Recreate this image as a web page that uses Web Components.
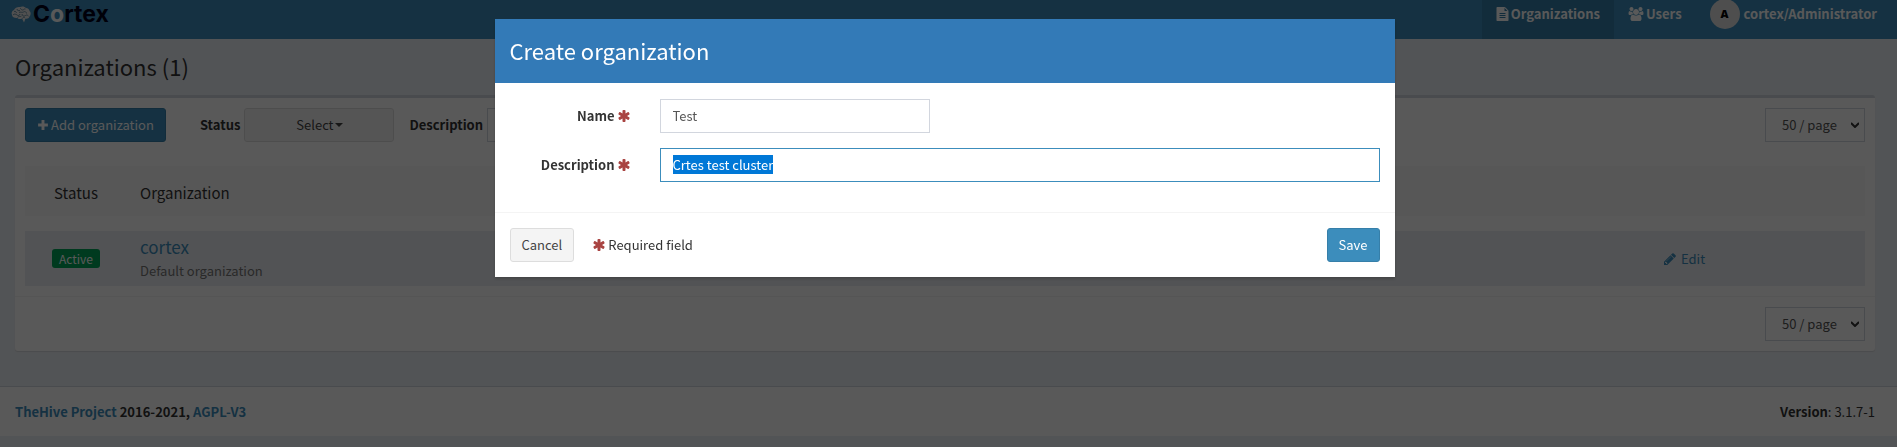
<!DOCTYPE html>
<html lang="en">
<head>
<meta charset="utf-8">
<title>Cortex</title>
<style>
  html { background: #ecf0f5; }
  body { margin: 0; color: #333; font: 13px/20px "Noto Sans CJK JP", "Open Sans", sans-serif; }
</style>
</head>
<body>
<cortex-header></cortex-header>
<cortex-content heading="Organizations (1)">
  <filter-bar></filter-bar>
  <organization-table></organization-table>
  <page-size slot="pager" name="bottom"></page-size>
</cortex-content>
<cortex-footer version="3.1.7-1"></cortex-footer>
<modal-dialog heading="Create organization">
  <organization-form></organization-form>
</modal-dialog>

<script>
const base = `
  *, *::before, *::after { box-sizing: border-box; }
  :host { display: block; }
  :host([hidden]) { display: none; }
  a { color: #3c8dbc; text-decoration: none; }
  svg { display: block; flex: none; fill: currentColor; }
  button, input, select { font: inherit; margin: 0; }
  .btn { display: inline-flex; align-items: center; justify-content: center; height: 34px; padding: 0 11px;
         border: 1px solid #ddd; border-radius: 3px; background: #f4f4f4; color: #444; cursor: pointer; white-space: nowrap; }
  .btn.primary { background: #3c8dbc; border-color: #367fa9; color: #fff; }
  .control { height: 34px; padding: 0 12px 2px; border: 1px solid #d2d6de; border-radius: 0; background: #fff; color: #555; outline: 0; }
`;

const icons = {
  file: ['0 0 1536 1792', 'M1468 380q28 28 48 76t20 88v1152q0 40-28 68t-68 28H96q-40 0-68-28t-28-68V96Q0 56 28 28T96 0h896q40 0 88 20t76 48zM1024 136v376h376q-10-29-22-41L1065 158q-12-12-41-22zM384 800v64q0 14 9 23t23 9h704q14 0 23-9t9-23v-64q0-14-9-23t-23-9H416q-14 0-23 9t-9 23zM1120 1024H416q-14 0-23 9t-9 23v64q0 14 9 23t23 9h704q14 0 23-9t9-23v-64q0-14-9-23t-23-9zM1120 1280H416q-14 0-23 9t-9 23v64q0 14 9 23t23 9h704q14 0 23-9t9-23v-64q0-14-9-23t-23-9z'],
  users: ['0 0 1920 1792', 'M593 896q-162 5-265 128H194q-82 0-138-40.500T0 865q0-353 124-353 6 0 43.500 21t97.500 42.500T384 597q67 0 133-23-5 37-5 66 0 139 81 256zM1664 1533q0 120-73 189.500t-194 69.500H523q-121 0-194-69.500T256 1533q0-53 3.500-103.500t14-109T300 1212t43-97.500 62-81 85.500-53.500T602 960q10 0 43 21.500t73 48 107 48 135 21.500 135-21.500 107-48 73-48 43-21.500q61 0 111.500 20t85.500 53.500 62 81 43 97.500 26.500 108.500 14 109 3.500 103.500zM640 256q0 106-75 181t-181 75-181-75-75-181 75-181T384 0t181 75 75 181zM1344 640q0 159-112.500 271.500T960 1024 688.500 911.500 576 640t112.500-271.500T960 256t271.500 112.500T1344 640zM1920 865q0 78-56 118.500t-138 40.500h-134q-103-123-265-128 81-117 81-256 0-29-5-66 66 23 133 23 59 0 119-21.500t97.500-42.500 43.500-21q124 0 124 353zM1792 256q0 106-75 181t-181 75-181-75-75-181 75-181T1536 0t181 75 75 181z'],
  plus: ['0 0 14 14', 'M5.300 1.300h3.400v4h4v3.400h-4v4H5.300v-4h-4V5.300h4z'],
  asterisk: ['0 0 1664 1792', 'M1546 1050q46 26 59.500 77.500T1592 1225l-64 110q-26 46-77.500 59.500T1353 1381l-266-153v307q0 52-38 90t-90 38H831q-52 0-90-38t-38-90v-307l-266 153q-46 26-97.500 12.500T262 1335l-64-110q-26-46-12.500-97.500T244 1050l266-154-266-154q-46-26-59.500-77.500T198 567l64-110q26-46 77.500-59.500T437 411l266 153V257q0-52 38-90t90-38h128q52 0 90 38t38 90v307l266-153q46-26 97.500-12.500T1528 457l64 110q26 46 12.500 97.500T1546 742l-266 154z'],
  pencil: ['0 0 1536 1536', 'M363 1408l91-91-235-235-91 91v107h128v128zM886 480q0-22-22-22-10 0-17 7l-542 542q-7 7-7 17 0 22 22 22 10 0 17-7l542-542q7-7 7-17zM832 288l416 416-832 832H0v-416zM1515 384q0 53-37 90l-166 166-416-416 166-165q36-38 90-38 53 0 91 38l235 234q37 39 37 91z'],
  caret: ['0 0 8 4', 'M0 0h8L4 4z']
};
const icon = (name, w, h) => `<svg viewBox="${icons[name][0]}" width="${w}" height="${h}" aria-hidden="true"><path d="${icons[name][1]}"/></svg>`;

function define(name, render, connected) {
  customElements.define(name, class extends HTMLElement {
    connectedCallback() {
      if (this.shadowRoot) return;
      const t = document.createElement('template');
      t.innerHTML = `<style>${base}</style>` + render(this);
      this.attachShadow({ mode: 'open' }).append(t.content.cloneNode(true));
      if (connected) connected(this);
    }
  });
}

define('cortex-logo', () => `
  <style>
    a { display: flex; align-items: center; gap: 2px; color: #00001a; font: 700 23px/30px Inter, sans-serif; }
    b { color: #fff; font-weight: inherit; }
    span { display: block; }
  </style>
  <a href="#" aria-label="Cortex home">
    <svg width="20" height="17" viewBox="0 0 20 17" aria-hidden="true">
      <path fill="#e6e6e6" d="M1 9C0 7 1 4.500 3 4 4 1.500 7 .5 9 1c2-1 5-.5 6 1 2 0 3.500 1.500 3.500 3C20 6 20 9 18.500 10.500c-.5 2-2.500 2.500-4 2L13 16.500l-2-4c-2 1-4 .5-4.500-.5C4 12.500 1 11 1 9z"/>
      <g fill="none" stroke="#3c6f8c" stroke-width=".7">
        <path d="M3 5.500c1.500-.5 2.500.5 2.500 1.500M2 9c1-1.500 3-1 4 0s3 .5 3-1M6 3c0 1.500 1.500 2 3 1.500M9 2c1 .5 1 2 2.500 2s1.500-1.500 3-1M8 6.500c1.500-1 3 .5 4.500-.5s3 0 3 1.500M11 8c0 2 2 2.500 3.500 1.500s2.500 0 3 .5M6.500 11.500c1-1.500 3-.5 4-1.500M11.500 12.500c.5-1.500 1.500-1.500 2.500-1"/>
      </g>
    </svg>
    <span>C<b>o</b>rtex</span>
  </a>`);

define('nav-item', el => `
  <style>
    a { display: flex; align-items: center; height: 100%; padding: 0 14px; gap: ${el.hasAttribute('avatar') ? 4 : 2}px; color: #fff; font-weight: 700; }
    a[aria-current] { background: rgba(0, 0, 0, .1); }
    i { display: grid; place-items: center; width: 30px; height: 30px; border-radius: 50%; background: #e0e0e0; color: #000; font: 800 11px/30px "Open Sans", sans-serif; }
  </style>
  <a href="#"${el.hasAttribute('active') ? ' aria-current="page"' : ''}>
    ${el.hasAttribute('avatar') ? `<i>${el.getAttribute('avatar')}</i>` : icon(el.getAttribute('icon'), el.getAttribute('icon') === 'users' ? 16 : 13, 14)}
    <slot></slot>
  </a>`);

define('cortex-header', () => `
  <style>
    :host { margin-top: -11px; background: #3c8dbc; }
    header { display: flex; justify-content: space-between; height: 50px; padding: 0 6px 0 11px; }
    nav { display: flex; }
    cortex-logo { align-self: center; }
  </style>
  <header>
    <cortex-logo></cortex-logo>
    <nav>
      <nav-item icon="file" active>Organizations</nav-item>
      <nav-item icon="users">Users</nav-item>
      <nav-item avatar="A">cortex/Administrator</nav-item>
    </nav>
  </header>`);

define('page-size', el => `
  <style>
    div { display: grid; align-items: center; width: 100px; }
    select, svg { grid-area: 1 / 1; }
    select.control { appearance: none; width: 100%; padding: 0 16px; }
    svg { justify-self: end; margin-right: 6px; fill: none; stroke: #333; stroke-width: 2; pointer-events: none; }
  </style>
  <div>
    <select class="control" name="${el.getAttribute('name')}" aria-label="Items per page"><option>50 / page</option><option>100 / page</option></select>
    <svg width="8" height="6" viewBox="0 0 8 6" aria-hidden="true"><path d="M0 1l4 4 4-4"/></svg>
  </div>`);

define('filter-bar', () => `
  <style>
    form { display: flex; align-items: center; }
    .field { display: flex; align-items: center; gap: 4px; }
    .btn { gap: 2px; }
    label { font-weight: 700; }
    .status { margin: 0 15px 0 34px; }
    .status .btn { width: 150px; gap: 1px; }
    .control { width: 250px; }
    page-size { margin-left: auto; }
  </style>
  <form>
    <button class="btn primary" type="button">${icon('plus', 12, 12)}Add organization</button>
    <div class="field status"><label for="status">Status</label><button class="btn" id="status" type="button">Select${icon('caret', 8, 4)}</button></div>
    <div class="field"><label for="description">Description</label><input class="control" id="description"></div>
    <page-size name="top"></page-size>
  </form>`);

define('organization-table', () => `
  <style>
    :host { margin-top: 24px; }
    table { width: 100%; table-layout: fixed; border-spacing: 0; }
    th, td { padding: 0 15px; text-align: left; vertical-align: middle; }
    th { height: 65px; padding-top: 3px; border-bottom: 15px solid transparent; background: #f9f9f9 padding-box; font-size: 15px; font-weight: 400; }
    td { height: 55px; background: #ebeef2; }
    th:first-child, td:first-child { padding-left: 2px; padding-right: 0; text-align: center; }
    .status { width: 100px; }
    .actions { width: 216px; }
    .badge { display: inline-block; padding: 0 7px; border-radius: 3px; background: #00a65a; color: #fff; font-size: 12px; line-height: 19px; }
    .name { font-size: 17px; line-height: 25px; }
    .about { color: #777; line-height: 24px; }
    .edit { display: inline-flex; align-items: center; gap: 5px; vertical-align: middle; }
  </style>
  <table>
    <colgroup><col class="status"><col><col class="actions"></colgroup>
    <thead><tr><th scope="col">Status</th><th scope="col">Organization</th><th></th></tr></thead>
    <tbody><tr>
      <td><span class="badge">Active</span></td>
      <td><a class="name" href="#">cortex</a><div class="about">Default organization</div></td>
      <td><a class="edit" href="#">${icon('pencil', 12, 12)}Edit</a></td>
    </tr></tbody>
  </table>`);

define('cortex-content', el => `
  <style>
    main { padding: 14px 22px 35px 15px; }
    h1 { margin: 0 0 16px; font-size: 22px; line-height: 26px; font-weight: 400; }
    .box { border-top: 3px solid #d2d6de; border-radius: 3px; background: #fff; box-shadow: 0 1px 1px rgba(0, 0, 0, .1); }
    .body { padding: 10px; }
    .foot { display: flex; justify-content: flex-end; padding: 10px; border-top: 1px solid #f4f4f4; }
  </style>
  <main>
    <h1>${el.getAttribute('heading')}</h1>
    <section class="box">
      <div class="body"><slot></slot></div>
      <div class="foot"><slot name="pager"></slot></div>
    </section>
  </main>`);

define('cortex-footer', el => `
  <style>
    footer { display: flex; justify-content: space-between; padding: 15px 22px 14px 15px; border-top: 1px solid #d2d6de; background: #fff; }
  </style>
  <footer>
    <strong><a href="#">TheHive Project</a> 2016-2021, <a href="#">AGPL-V3</a></strong>
    <span><b>Version</b>: ${el.getAttribute('version')}</span>
  </footer>`);

define('modal-dialog', el => `
  <style>
    :host { position: fixed; inset: 0; overflow: auto; background: rgba(0, 0, 0, .65); }
    section { max-width: 900px; margin: 19px auto; margin-inline: max(10px, calc(50% - 454px)) auto; background: #fff; box-shadow: 0 2px 3px rgba(0, 0, 0, .2); }
    h2 { margin: 0; padding: 18px 15px 20px; background: #337ab7; color: #fff; font-size: 22px; line-height: 26px; font-weight: 400; }
  </style>
  <section role="dialog" aria-modal="true" aria-labelledby="heading">
    <h2 id="heading">${el.getAttribute('heading')}</h2>
    <slot></slot>
  </section>`);

define('organization-form', () => `
  <style>
    .fields { display: grid; gap: 15px; padding: 16px 15px 30px; }
    .row { display: grid; grid-template-columns: 120px 1fr; gap: 30px; align-items: center; }
    label { display: flex; align-items: center; justify-content: flex-end; gap: 2px; font-weight: 700; }
    .row svg, .hint svg { color: #a94442; }
    .control { width: 100%; min-width: 0; }
    .short { width: 37.5%; }
    .control:focus { border-color: #3c8dbc; }
    .control::selection { background: #0078d7; color: #fff; }
    .actions { display: flex; align-items: center; padding: 15px; border-top: 1px solid #f4f4f4; }
    .hint { display: flex; align-items: center; gap: 3px; margin: 0 auto 0 18px; }
  </style>
  <form>
    <div class="fields">
      <div class="row"><label for="name">Name ${icon('asterisk', 13, 14)}</label><input class="control short" id="name" value="Test" required></div>
      <div class="row"><label for="about">Description ${icon('asterisk', 13, 14)}</label><input class="control" id="about" value="Crtes test cluster" required></div>
    </div>
    <div class="actions">
      <button class="btn" type="button">Cancel</button>
      <span class="hint">${icon('asterisk', 13, 14)}Required field</span>
      <button class="btn primary" type="submit">Save</button>
    </div>
  </form>`, el => {
    const input = el.shadowRoot.getElementById('about');
    input.focus();
    input.select();
  });
</script>
</body>
</html>
